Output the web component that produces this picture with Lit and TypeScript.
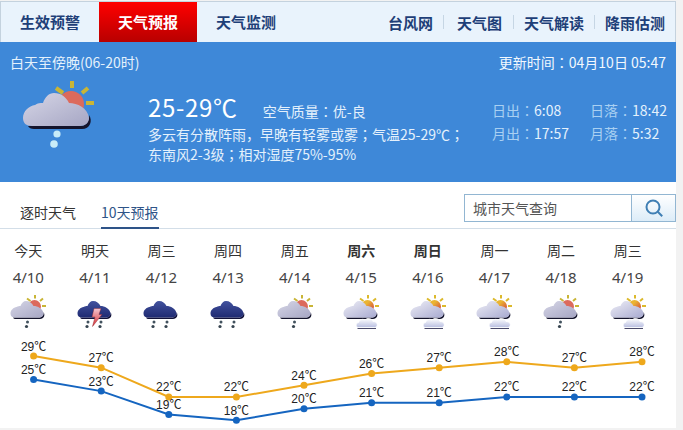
import {LitElement, css, html, svg} from 'lit'
import {customElement} from 'lit/decorators.js'

type Kind = 'shower' | 'thunder' | 'rain' | 'partly'

const DAYS: {name: string; date: string; kind: Kind; hi: number; lo: number; bold?: boolean}[] = [
  {name: '今天', date: '4/10', kind: 'shower', hi: 29, lo: 25},
  {name: '明天', date: '4/11', kind: 'thunder', hi: 27, lo: 23},
  {name: '周三', date: '4/12', kind: 'rain', hi: 22, lo: 19},
  {name: '周四', date: '4/13', kind: 'rain', hi: 22, lo: 18},
  {name: '周五', date: '4/14', kind: 'shower', hi: 24, lo: 20},
  {name: '周六', date: '4/15', kind: 'partly', hi: 26, lo: 21, bold: true},
  {name: '周日', date: '4/16', kind: 'partly', hi: 27, lo: 21, bold: true},
  {name: '周一', date: '4/17', kind: 'partly', hi: 28, lo: 22},
  {name: '周二', date: '4/18', kind: 'shower', hi: 27, lo: 22},
  {name: '周三', date: '4/19', kind: 'partly', hi: 28, lo: 22},
]

const CLOUD = 'M3 39C3 32 9 27 15 26 18 24 20 24 23 24 25 18 29 14 34 14 41 14 46 18 49 24 57 24 68 29 69 39 69 44 65 47 60 47H12C6 47 3 44 3 39Z'
const SHADOW = 'M8 47H60C66 47 70 42 69 36 73 42 70 50 62 50H14C11 50 9 49 8 47Z'

const x = (i: number) => 33.6 + 67.6 * i
// 29 degrees sits at y 26 in the chart, each degree is 5.85px
const y = (t: number) => 26 + (29 - t) * 5.85

// the colon and semicolon sit centred in their cell in the reference, TC draws them that way
const cn = (text: string) =>
  text.split(/([：；])/).map((part) => (part === '：' || part === '；' ? html`<span class="punct">${part}</span>` : part))

const sun = (fill: string, rays: string) => svg`
  <circle cx="51" cy="25" r="13" fill=${fill}/>
  <path d="M52 2v7M36 9l7 5M68 9l-6 5M66 24h8" stroke=${rays} stroke-width="4" fill="none"/>
`

const wetDrops = (cx: number) => svg`
  <circle cx=${cx + 1} cy="56" r="3" fill="#42525e"/>
  <circle cx=${cx - 1} cy="65" r="3.2" fill="#36444f"/>
`

function icon(kind: Kind, big = false) {
  const light = kind === 'partly'
  const dark = kind === 'thunder' || kind === 'rain'
  return html`<svg class=${big ? 'icon-big' : 'icon'} viewBox="0 0 76 72">
    <defs>
      <linearGradient id="c-grey" x1="0" y1="0" x2="1" y2="1">
        <stop offset="0" stop-color="#d6d6e6"/><stop offset="1" stop-color="#a6a6c4"/>
      </linearGradient>
      <linearGradient id="c-light" x1="0" y1="0" x2="1" y2="1">
        <stop offset="0" stop-color="#eeeef6"/><stop offset="1" stop-color="#a8aad0"/>
      </linearGradient>
      <linearGradient id="c-small" x1="0" y1="0" x2="0" y2="1">
        <stop offset="0" stop-color="#ffffff"/><stop offset="1" stop-color="#b8bee0"/>
      </linearGradient>
      <linearGradient id="c-dark" x1="0" y1="0" x2="0" y2="1">
        <stop offset="0" stop-color="#42529e"/><stop offset="1" stop-color="#1f2a72"/>
      </linearGradient>
      <linearGradient id="c-sun" x1="0" y1="0" x2="1" y2="1">
        <stop offset="0.35" stop-color="#eab432"/><stop offset="0.8" stop-color="#d8583c"/>
      </linearGradient>
      <linearGradient id="c-bolt" x1="0" y1="0" x2="0" y2="1">
        <stop offset="0" stop-color="#f6c6d0"/><stop offset="1" stop-color="#d42c30"/>
      </linearGradient>
    </defs>
    ${dark ? '' : light ? sun('url(#c-sun)', '#dcb92c') : sun('#dc6a5c', '#c9b536')}
    <path d=${SHADOW} fill=${dark ? '#101038' : '#14142c'}/>
    <path d=${CLOUD} fill=${light ? 'url(#c-light)' : dark ? 'url(#c-dark)' : 'url(#c-grey)'}/>
    ${kind === 'partly'
      ? svg`<path d="M31 69H68" stroke="#4a4a6a" stroke-width="2"/>
        <path d="M32 67C27 66 27 58 33 57 35 51 41 49 46 52 50 47 60 48 62 55 68 55 72 59 70 64 69 66 67 67 65 67Z" fill="url(#c-small)" stroke="#fff" stroke-width="1.5"/>`
      : ''}
    ${kind === 'shower'
      ? big
        ? svg`<circle cx="37" cy="55" r="3.6" fill="#c8ecf8"/><circle cx="34" cy="65" r="3.8" fill="#c8ecf8"/>`
        : wetDrops(36)
      : ''}
    ${kind === 'rain' ? svg`${wetDrops(23)}${wetDrops(49)}` : ''}
    ${kind === 'thunder'
      ? svg`${wetDrops(23)}${wetDrops(49)}
        <path d="M36 29H50L46 41H52L33 65 38 46H32Z" fill="url(#c-bolt)" stroke="#8c1c24" stroke-width="0.8"/>`
      : ''}
  </svg>`
}

function series(key: 'hi' | 'lo', color: string) {
  const pts = DAYS.map((d, i) => `${x(i)},${y(d[key])}`).join(' ')
  return svg`
    <polyline points=${pts} fill="none" stroke=${color} stroke-width="2"/>
    ${DAYS.map((d, i) => svg`
      <circle cx=${x(i)} cy=${y(d[key])} r="3.5" fill=${color}/>
      <text x=${x(i)} y=${y(d[key]) - 5.5} text-anchor="middle">${d[key]}℃</text>
    `)}
  `
}

@customElement('app-root')
export class AppRoot extends LitElement {
  static styles = css`
    * {
      box-sizing: border-box;
    }

    :host {
      display: block;
      width: 683px;
      height: 430px;
      overflow: hidden;
      background: #f2f2f2;
      font-family: 'Noto Sans CJK SC', 'Noto Sans', sans-serif;
      color: #333;
    }

    .card {
      width: 676px;
      height: 427px;
      background: #fff;
    }

    .punct {
      font-family: 'Noto Sans CJK TC', sans-serif;
    }

    .nav {
      display: flex;
      justify-content: space-between;
      height: 41px;
      margin-top: 1px;
      border: 1px solid #c4d2de;
      border-bottom: 0;
      background: #e9f3fc;
      font-size: 15px;
      font-weight: 700;
      color: #1e3f78;
    }

    .tabs {
      display: flex;
    }

    .tabs a {
      width: 98px;
      line-height: 40px;
      text-align: center;
    }

    .tabs a.on {
      color: #fff;
      background: linear-gradient(#ff0000, #b80000);
    }

    .links {
      display: flex;
      align-items: center;
      gap: 10px;
      padding-right: 10px;
    }

    .links a:nth-of-type(2) {
      margin: 0 1px 0 3px;
    }

    .links i {
      width: 1px;
      height: 14px;
      background: #c6d6e4;
    }

    .panel {
      height: 140px;
      padding: 0 10px;
      background: #3e88d8;
      color: #e4f1fc;
      font-size: 14px;
    }

    .panel-head {
      display: flex;
      justify-content: space-between;
      height: 41px;
      line-height: 41px;
    }

    .update {
      color: #f2f8fe;
    }

    .panel-body {
      display: flex;
    }

    .icon-big {
      flex: none;
      width: 76px;
      height: 72px;
      margin: -4px 0 0 10px;
    }

    .now {
      flex: none;
      width: 344px;
      margin-left: 52px;
      line-height: 20px;
    }

    .temp-row {
      display: flex;
      align-items: baseline;
      gap: 25px;
      height: 35px;
      margin-top: 6px;
      line-height: 36px;
    }

    .temp {
      font-size: 24px;
      letter-spacing: 0.7px;
      color: #fff;
    }

    .astro {
      display: grid;
      grid-template-columns: 98px 76px;
      grid-auto-rows: 23px;
      margin-top: 16px;
      line-height: 23px;
      white-space: nowrap;
    }

    .astro b {
      font-weight: 400;
      color: #a9d0f2;
    }

    .sub {
      display: flex;
      justify-content: space-between;
      height: 47px;
      padding-left: 20px;
      border-bottom: 1px solid #d3dee8;
      font-size: 14px;
    }

    .sub-tabs {
      display: flex;
      gap: 25px;
    }

    .sub-tabs a {
      height: 46px;
      padding-top: 19px;
      line-height: 22px;
    }

    .sub-tabs a.on {
      color: #2e5488;
      height: 47px;
      border-bottom: 2px solid #2e5488;
    }

    .search {
      display: flex;
      width: 212px;
      height: 28px;
      margin-top: 12px;
      border: 1px solid #92b6d2;
      line-height: 26px;
      color: #555;
    }

    .search span {
      flex: 1;
      padding-left: 8px;
    }

    .search button {
      display: flex;
      align-items: center;
      justify-content: center;
      width: 44px;
      padding: 0;
      border: 0;
      border-left: 1px solid #92b6d2;
      background: linear-gradient(#fff, #dcecf8);
    }

    .days {
      display: grid;
      grid-template-columns: repeat(10, 66.6px);
      margin-left: -5px;
      font-size: 14px;
    }

    .day {
      display: flex;
      flex-direction: column;
      align-items: center;
      padding-top: 10px;
      line-height: 22px;
    }

    .day .date {
      margin-top: 5px;
      font-family: 'Noto Sans', sans-serif;
      font-size: 15px;
      color: #444;
    }

    .day .bold {
      font-weight: 700;
    }

    .icon {
      width: 38px;
      height: 36px;
      margin-top: 6px;
    }

    .chart {
      display: block;
      width: 676px;
      height: 97px;
      font-family: 'Liberation Sans', 'Noto Sans CJK SC', sans-serif;
      font-size: 12px;
      fill: #222;
    }
  `

  render() {
    return html`
      <div class="card">
        <div class="nav">
          <div class="tabs">
            <a>生效预警</a>
            <a class="on">天气预报</a>
            <a>天气监测</a>
          </div>
          <div class="links">
            <a>台风网</a><i></i><a>天气图</a><i></i><a>天气解读</a><i></i><a>降雨估测</a>
          </div>
        </div>
        <div class="panel">
          <div class="panel-head">
            <span>白天至傍晚(06-20时)</span>
            <span class="update">${cn('更新时间：04月10日 05:47')}</span>
          </div>
          <div class="panel-body">
            ${icon('shower', true)}
            <div class="now">
              <div class="temp-row">
                <span class="temp">25-29℃</span>
                <span>${cn('空气质量：优-良')}</span>
              </div>
              <div>${cn('多云有分散阵雨，早晚有轻雾或雾；气温25-29℃；')}<br />${cn('东南风2-3级；相对湿度75%-95%')}</div>
            </div>
            <div class="astro">
              <span><b>日出<span class="punct">：</span></b>6:08</span><span><b>日落<span class="punct">：</span></b>18:42</span>
              <span><b>月出<span class="punct">：</span></b>17:57</span><span><b>月落<span class="punct">：</span></b>5:32</span>
            </div>
          </div>
        </div>
        <div class="sub">
          <div class="sub-tabs">
            <a>逐时天气</a>
            <a class="on">10天预报</a>
          </div>
          <div class="search">
            <span>城市天气查询</span>
            <button aria-label="查询">
              <svg width="20" height="20" viewBox="0 0 20 20" fill="none" stroke="#3f7fb4" stroke-width="2">
                <circle cx="9" cy="9" r="6.5"/>
                <path d="M13.8 13.8l4.4 4.4"/>
              </svg>
            </button>
          </div>
        </div>
        <div class="days">
          ${DAYS.map(
            (d) => html`<div class="day">
              <span class=${d.bold ? 'bold' : ''}>${d.name}</span>
              <span class="date">${d.date}</span>
              ${icon(d.kind)}
            </div>`
          )}
        </div>
        <svg class="chart" viewBox="0 0 676 97">
          ${series('hi', '#eea81c')}
          ${series('lo', '#1565c0')}
        </svg>
      </div>
    `
  }
}
